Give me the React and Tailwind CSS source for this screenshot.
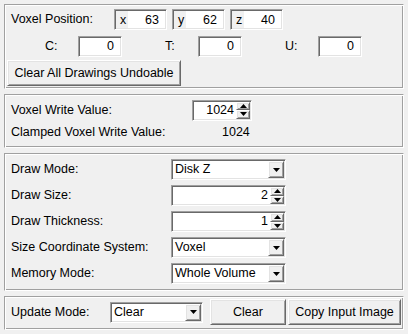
import React from "react";

const sunken =
  "border border-t-[#a0a0a0] border-l-[#a0a0a0] border-b-white border-r-white shadow-[inset_1px_1px_0_#696969,inset_-1px_-1px_0_#e3e3e3]";
const raised =
  "border border-t-white border-l-white border-b-[#696969] border-r-[#696969] shadow-[inset_1px_1px_0_#e3e3e3,inset_-1px_-1px_0_#a0a0a0] bg-[#f0f0f0]";

const Frame = ({ className, children }) => (
  <div
    className={`w-[400px] border border-t-[#a0a0a0] border-l-[#a0a0a0] border-b-white border-r-white shadow-[inset_1px_1px_0_#fff,inset_-1px_-1px_0_#a0a0a0] pl-[2px] ${className}`}
  >
    {children}
  </div>
);

const Down = () => (
  <svg width="7" height="4" viewBox="0 0 7 4">
    <polygon points="0,0 7,0 3.5,4" fill="#000" />
  </svg>
);

const Up = () => (
  <svg width="7" height="4" viewBox="0 0 7 4">
    <polygon points="0,4 7,4 3.5,0" fill="#000" />
  </svg>
);

const Coord = ({ axis, value }) => (
  <div className={`w-[53px] h-[21px] flex ${sunken}`}>
    <span className="w-[12px] pl-[4px] bg-[#f0f0f0] leading-[19px] ml-[1px] mt-[1px] h-[17px]">{axis}</span>
    <span className="flex-1 bg-white text-right pr-[6px] leading-[19px] mr-[1px] mt-[1px] mb-[1px]">{value}</span>
  </div>
);

const Entry = ({ value }) => (
  <div className={`w-[44px] h-[21px] bg-white text-right pr-[7px] leading-[19px] ${sunken}`}>{value}</div>
);

const Spin = ({ w, value }) => (
  <div className={`${w} h-[21px] bg-white flex ${sunken}`}>
    <span className="flex-1 text-right pr-[2px] leading-[19px]">{value}</span>
    <div className="w-[15px] flex flex-col py-[1px] pr-[1px]">
      <div className={`flex-1 flex items-center justify-center ${raised}`}>
        <Up />
      </div>
      <div className={`flex-1 flex items-center justify-center ${raised}`}>
        <Down />
      </div>
    </div>
  </div>
);

const Combo = ({ w, value }) => (
  <div className={`${w} h-[21px] bg-white flex ${sunken}`}>
    <span className="flex-1 pl-[3px] leading-[19px]">{value}</span>
    <div className="w-[17px] py-[1px] pr-[1px] flex">
      <div className={`flex-1 flex items-center justify-center ${raised}`}>
        <Down />
      </div>
    </div>
  </div>
);

const Row = ({ label, children }) => (
  <div className="flex items-center h-[21px]">
    <span className="w-[164px] pl-[4px]">{label}</span>
    {children}
  </div>
);

export default function App() {
  return (
    <div
      className="w-[408px] h-[334px] bg-[#f0f0f0] pt-[4px] pl-[4px] flex flex-col gap-[5px] text-[12.5px] text-black overflow-hidden"
      style={{ fontFamily: '"Liberation Sans", Arial, sans-serif' }}
    >
      <Frame className="h-[85px] pt-[4px]">
        <div className="flex items-center h-[21px]">
          <span className="w-[107px] pl-[4px]">Voxel Position:</span>
          <div className="flex gap-[5px]">
            <Coord axis="x" value="63" />
            <Coord axis="y" value="62" />
            <Coord axis="z" value="40" />
          </div>
        </div>
        <div className="flex items-center h-[21px] mt-[6px]">
          {[
            ["C:", "0"],
            ["T:", "0"],
            ["U:", "0"],
          ].map(([l, v]) => (
            <div key={l} className="flex items-center w-[120px]">
              <span className="w-[71px] pl-[38px]">{l}</span>
              <Entry value={v} />
            </div>
          ))}
        </div>
        <button className={`mt-[3px] w-[174px] h-[26px] text-center ${raised}`}>
          Clear All Drawings Undoable
        </button>
      </Frame>

      <Frame className="h-[54px] pt-[4px]">
        <div className="flex items-center h-[22px]">
          <span className="w-[185px] pl-[4px]">Voxel Write Value:</span>
          <Spin w="w-[60px]" value="1024" />
        </div>
        <div className="flex items-center h-[18px] mt-[2px]">
          <span className="w-[215px] pl-[4px]">Clamped Voxel Write Value:</span>
          <span>1024</span>
        </div>
      </Frame>

      <Frame className="h-[138px] pt-[5px] flex flex-col gap-[5px]">
        <Row label="Draw Mode:">
          <Combo w="w-[115px]" value="Disk Z" />
        </Row>
        <Row label="Draw Size:">
          <Spin w="w-[115px]" value="2" />
        </Row>
        <Row label="Draw Thickness:">
          <Spin w="w-[115px]" value="1" />
        </Row>
        <Row label="Size Coordinate System:">
          <Combo w="w-[115px]" value="Voxel" />
        </Row>
        <Row label="Memory Mode:">
          <Combo w="w-[115px]" value="Whole Volume" />
        </Row>
      </Frame>

      <Frame className="h-[34px] pt-[2px]">
        <div className="flex items-center h-[26px]">
          <span className="w-[103px] pl-[4px]">Update Mode:</span>
          <Combo w="w-[93px]" value="Clear" />
          <button className={`ml-[7px] w-[76px] h-[26px] ${raised}`}>Clear</button>
          <button className={`ml-[2px] w-[113px] h-[26px] ${raised}`}>Copy Input Image</button>
        </div>
      </Frame>
    </div>
  );
}
